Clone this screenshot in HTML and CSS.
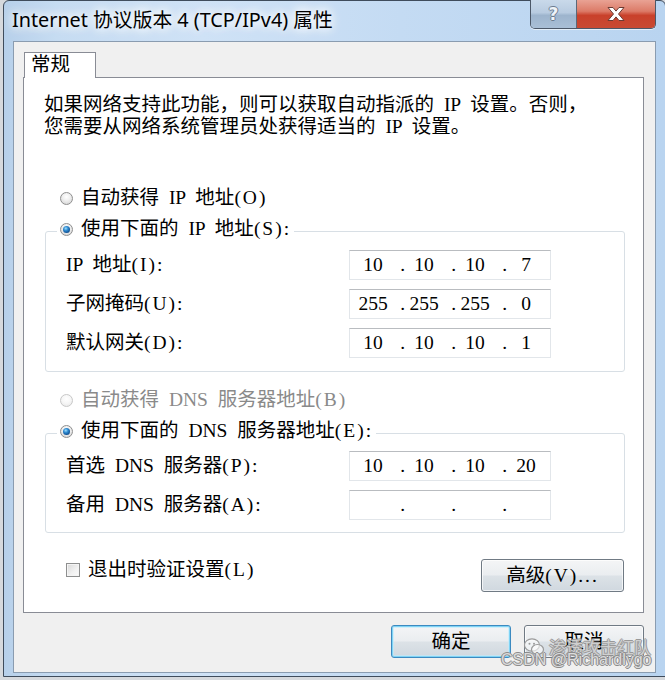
FILE: index.html
```html
<!DOCTYPE html>
<html lang="zh-CN">
<head>
<meta charset="utf-8">
<title>Internet 协议版本 4 (TCP/IPv4) 属性</title>
<link rel="stylesheet" href="styles.css">
</head>
<body>
<div class="window">
  <div class="titlebar">
    <div class="title">Internet 协议版本 4 (TCP/IPv4) 属性</div>
    <div class="caption-btns">
      <div class="cbtn help">?</div>
      <div class="cbtn close">
        <svg width="20" height="16" viewBox="0 0 20 16"><path d="M2 1.5h5l3 3.6 3-3.6h5l-5.5 6.5 5.5 6.5h-5l-3-3.6-3 3.6H2l5.5-6.5z" fill="#fff" stroke="#6b3b33" stroke-width="1" stroke-linejoin="round"/></svg>
      </div>
    </div>
  </div>
  <div class="client">
    <div class="tabs"><div class="tab">常规</div></div>
    <div class="panel">
      <p class="intro">如果网络支持此功能，则可以获取自动指派的 IP 设置。否则，<br>您需要从网络系统管理员处获得适当的 IP 设置。</p>

      <div class="option first"><span class="radio"></span>自动获得 IP 地址<span class="k">(O)</span></div>
      <fieldset class="group g1">
        <legend class="option"><span class="radio on"></span>使用下面的 IP 地址<span class="k">(S):</span></legend>
        <div class="fields">
          <div class="label">IP 地址<span class="k">(I):</span></div>
          <div class="ip"><span class="seg">10</span><span class="dot">.</span><span class="seg">10</span><span class="dot">.</span><span class="seg">10</span><span class="dot">.</span><span class="seg">7</span></div>
          <div class="label">子网掩码<span class="k">(U):</span></div>
          <div class="ip"><span class="seg">255</span><span class="dot">.</span><span class="seg">255</span><span class="dot">.</span><span class="seg">255</span><span class="dot">.</span><span class="seg">0</span></div>
          <div class="label">默认网关<span class="k">(D):</span></div>
          <div class="ip"><span class="seg">10</span><span class="dot">.</span><span class="seg">10</span><span class="dot">.</span><span class="seg">10</span><span class="dot">.</span><span class="seg">1</span></div>
        </div>
      </fieldset>

      <div class="option disabled second"><span class="radio off-dis"></span>自动获得 DNS 服务器地址<span class="k">(B)</span></div>
      <fieldset class="group g2">
        <legend class="option"><span class="radio on"></span>使用下面的 DNS 服务器地址<span class="k">(E):</span></legend>
        <div class="fields">
          <div class="label">首选 DNS 服务器<span class="k">(P):</span></div>
          <div class="ip"><span class="seg">10</span><span class="dot">.</span><span class="seg">10</span><span class="dot">.</span><span class="seg">10</span><span class="dot">.</span><span class="seg">20</span></div>
          <div class="label">备用 DNS 服务器<span class="k">(A):</span></div>
          <div class="ip"><span class="seg"></span><span class="dot">.</span><span class="seg"></span><span class="dot">.</span><span class="seg"></span><span class="dot">.</span><span class="seg"></span></div>
        </div>
      </fieldset>

      <div class="extra">
        <div class="check"><span class="box"></span>退出时验证设置<span class="k">(L)</span></div>
        <div class="btn adv">高级<span class="k">(V)...</span></div>
      </div>
    </div>
    <div class="actions">
      <div class="btn default">确定</div>
      <div class="btn">取消</div>
    </div>
  </div>
  <div class="watermark">
    <div class="wm-line1">
      <svg width="22" height="20" viewBox="0 0 22 20"><ellipse cx="9" cy="8" rx="7.5" ry="6.2" fill="rgba(255,255,255,.6)" stroke="#9a9a9a" stroke-width="1.2"/><ellipse cx="14.5" cy="12.5" rx="6" ry="5" fill="rgba(255,255,255,.6)" stroke="#9a9a9a" stroke-width="1.2"/><circle cx="6.5" cy="6.8" r="1" fill="#9a9a9a"/><circle cx="11" cy="6.8" r="1" fill="#9a9a9a"/></svg>
      <span>渗透攻击红队</span>
    </div>
    <div class="wm-line2">CSDN @Richardlygo</div>
  </div>
</div>
</body>
</html>
```

FILE: styles.css
```css
html, body {
  margin: 0;
  padding: 0;
  overflow: hidden;
}
body {
  width: 665px;
  height: 680px;
  background: #d6d9dd;
}
.window {
  position: relative;
  margin-left: 3px;
  width: 663px;
  height: 677px;
  box-sizing: border-box;
  border: 1px solid #3f4c5c;
  border-radius: 6px 6px 0 0;
  background: linear-gradient(90deg, #b7d0ea 0%, #c6dcf2 8%, #cfe2f6 30%, #c4dbf3 60%, #b9d4f0 100%);
}
.titlebar {
  height: 40px;
  display: flex;
  align-items: flex-start;
  justify-content: space-between;
}
.title {
  padding: 6px 0 0 8px;
  font-family: "Noto Sans", "Noto Sans CJK SC", sans-serif;
  font-size: 19.8px;
  line-height: 26px;
  color: #000;
  white-space: nowrap;
  text-shadow: 0 0 8px #fff, 0 0 12px #fff, 0 0 14px rgba(255,255,255,.9);
}
.caption-btns {
  display: flex;
  margin: -1px 9px 0 0;
  height: 28px;
  border: 1px solid #4c5868;
  border-top: none;
  border-radius: 0 0 5px 5px;
  overflow: hidden;
  box-shadow: 0 1px 0 rgba(255,255,255,.6);
}
.cbtn {
  height: 28px;
  display: flex;
  align-items: center;
  justify-content: center;
}
.help {
  width: 45px;
  border-right: 1px solid #5b6878;
  background: linear-gradient(#c9d9ea 0%, #b8cbe0 45%, #9db4cd 55%, #a9bfd6 100%);
  font-family: "DejaVu Sans", sans-serif;
  font-weight: bold;
  font-size: 17px;
  color: #eef3f8;
  text-shadow: 1px 0 0 #6d7d90, -1px 0 0 #6d7d90, 0 1px 0 #6d7d90, 0 -1px 0 #6d7d90;
}
.close {
  width: 78px;
  background: linear-gradient(#e9a294 0%, #dc7b68 40%, #c9412b 55%, #c84a33 100%);
}
.client {
  margin-left: 9px;
  width: 643px;
  height: 632px;
  box-sizing: border-box;
  border: 1px solid #8a9cb0;
  background: #f0f0f0;
  padding: 10px 0 0 9px;
  font-family: "Liberation Serif", "Noto Sans CJK SC", serif;
  font-size: 19.5px;
  word-spacing: 5px;
  color: #000;
}
.k {
  letter-spacing: 2px;
}
.tabs {
  display: flex;
  position: relative;
  z-index: 1;
}
.tab {
  margin-left: 1px;
  margin-bottom: -1px;
  width: 72px;
  height: 26px;
  box-sizing: border-box;
  border: 1px solid #898c95;
  border-bottom: none;
  background: #fff;
  padding-left: 6px;
  line-height: 24px;
}
.panel {
  width: 621px;
  height: 536px;
  box-sizing: border-box;
  border: 1px solid #898c95;
  background: #fff;
}
.intro {
  margin: 16px 0 0 20px;
  line-height: 22px;
  white-space: nowrap;
}
.option {
  display: flex;
  align-items: center;
  height: 22px;
  line-height: 22px;
  white-space: pre;
}
.option .radio {
  margin-right: 8px;
}
.option.first {
  margin: 49px 0 0 36px;
}
.option.second {
  margin: 17px 0 0 36px;
}
.option.disabled {
  color: #8a8a8a;
}
.radio {
  width: 13px;
  height: 13px;
  box-sizing: border-box;
  border-radius: 50%;
  border: 1px solid #8f8f8f;
  background: radial-gradient(circle at 50% 35%, #ffffff 0%, #f0f0f0 40%, #cfcfcf 100%);
  display: flex;
  align-items: center;
  justify-content: center;
  flex: none;
}
.radio.on::after {
  content: "";
  width: 7px;
  height: 7px;
  border-radius: 50%;
  background: radial-gradient(circle at 40% 35%, #9ee0ff 0%, #2f8ad0 35%, #0d4c8e 75%, #0a3a70 100%);
}
.radio.off-dis {
  border-color: #c8c8c8;
  background: radial-gradient(circle at 50% 35%, #ffffff 0%, #f6f6f6 50%, #e4e4e4 100%);
}
.group {
  margin: 9px 0 0 21px;
  width: 580px;
  box-sizing: border-box;
  min-inline-size: 0;
  border: 1px solid #d8dfe5;
  border-radius: 3px;
  padding: 6px 0 13px 20px;
}
.group.g2 {
  padding: 5px 0 12px 20px;
}
.group legend {
  margin-left: -9px;
  padding: 0 3px 4px 3px;
  background: transparent;
}
.fields {
  display: grid;
  grid-template-columns: 283px 202px;
  row-gap: 9px;
  align-items: center;
}
.label {
  white-space: pre;
  line-height: 22px;
}
.ip {
  width: 202px;
  height: 30px;
  box-sizing: border-box;
  border: 1px solid #e2e6ea;
  border-top-color: #b9bcc0;
  display: flex;
  padding-left: 4px;
  line-height: 28px;
  word-spacing: 0;
}
.seg {
  width: 38px;
  text-align: center;
}
.dot {
  width: 13px;
  text-align: right;
}
.extra {
  display: flex;
  justify-content: space-between;
  align-items: flex-start;
  margin: 26px 19px 0 42px;
}
.check {
  display: flex;
  align-items: center;
  height: 22px;
  line-height: 22px;
}
.box {
  width: 14px;
  height: 14px;
  box-sizing: border-box;
  border: 1px solid #8e8f8f;
  background: linear-gradient(135deg, #d8d8d8 0%, #f2f2f2 60%, #fbfbfb 100%);
  box-shadow: inset 0 0 0 1px #f4f4f4;
  margin-right: 8px;
}
.btn {
  width: 120px;
  height: 33px;
  box-sizing: border-box;
  border: 1px solid #707a84;
  border-radius: 3px;
  background: linear-gradient(#f4f5f6 0%, #eaedf0 48%, #dce2e7 52%, #d0d8df 100%);
  box-shadow: inset 0 0 0 1px rgba(255,255,255,.7);
  display: flex;
  align-items: center;
  justify-content: center;
  line-height: 22px;
  white-space: pre;
}
.btn.adv {
  width: 143px;
}
.btn.default {
  border-color: #3c8ac0;
  box-shadow: inset 0 0 0 1px #7fd3f5, inset 0 0 0 2px rgba(190,235,252,.6);
}
.actions {
  width: 621px;
  display: flex;
  justify-content: flex-end;
  gap: 13px;
  margin-top: 12px;
}
.watermark {
  position: absolute;
  left: 497px;
  top: 636px;
  pointer-events: none;
}
.wm-line1 {
  display: flex;
  align-items: center;
  gap: 4px;
  margin-left: 22px;
  font-family: "Noto Sans CJK SC", sans-serif;
  font-size: 17px;
  line-height: 20px;
  color: rgba(255,255,255,.55);
  text-shadow: 1px 0 0 #999, -1px 0 0 #999, 0 1px 0 #999, 0 -1px 0 #999;
}
.wm-line2 {
  margin-top: -6px;
  font-family: "Liberation Sans", sans-serif;
  font-size: 16px;
  line-height: 18px;
  color: rgba(255,255,255,.7);
  text-shadow: 1px 0 0 #8c8c8c, -1px 0 0 #8c8c8c, 0 1px 0 #8c8c8c, 0 -1px 0 #8c8c8c;
  white-space: nowrap;
}
```
